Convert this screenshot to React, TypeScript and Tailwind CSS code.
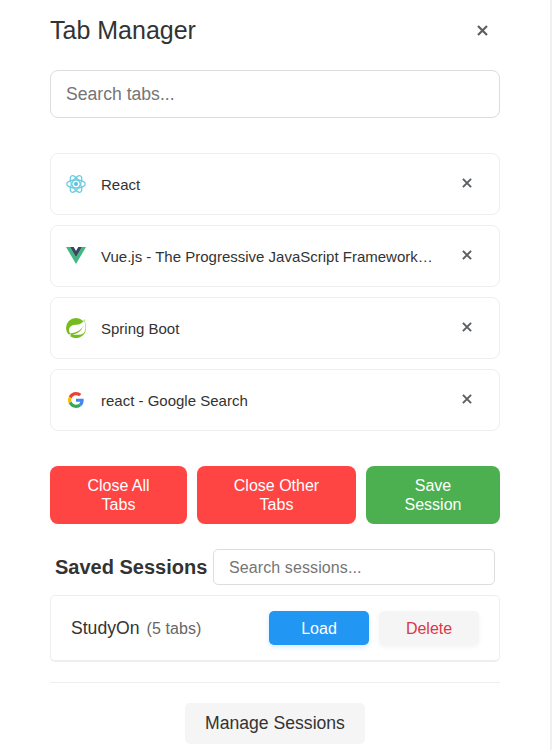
import type { ReactNode } from "react";
import { SiSpring } from "react-icons/si";

function CloseIcon({ size }: { size: number }) {
  return (
    <svg width={size} height={size} viewBox="0 0 11 11" fill="none" stroke="#5c6064" strokeWidth="2.2">
      <path d="M1 1L10 10M10 1L1 10" />
    </svg>
  );
}

function ReactIcon() {
  return (
    <svg width="20" height="20" viewBox="0 0 20 20" fill="none" stroke="#6accdf" strokeWidth="1.3">
      <ellipse cx="10" cy="10" rx="9.3" ry="4" />
      <ellipse cx="10" cy="10" rx="9.3" ry="4" transform="rotate(60 10 10)" />
      <ellipse cx="10" cy="10" rx="9.3" ry="4" transform="rotate(120 10 10)" />
      <circle cx="10" cy="10" r="2" fill="#53c1de" stroke="none" />
    </svg>
  );
}

function VueIcon() {
  return (
    <svg className="mb-px" width="20" height="17" viewBox="0 0 20 17.4" preserveAspectRatio="none">
      <path d="M0 0H4L10 10.4L16 0H20L10 17.4Z" fill="#41b883" />
      <path d="M4 0H7.7L10 4L12.3 0H16L10 10.4Z" fill="#35495e" />
    </svg>
  );
}

function GoogleIcon() {
  return (
    <svg width="16" height="16" viewBox="0 0 48 48">
      <path fill="#EA4335" d="M24 9.5c3.54 0 6.71 1.22 9.21 3.6l6.85-6.85C35.9 2.38 30.47 0 24 0 14.62 0 6.51 5.38 2.56 13.22l7.98 6.19C12.43 13.72 17.74 9.5 24 9.5z" />
      <path fill="#4285F4" d="M46.98 24.55c0-1.57-.15-3.09-.38-4.55H24v9.02h12.94c-.58 2.96-2.26 5.48-4.78 7.18l7.73 6c4.51-4.18 7.09-10.36 7.09-17.65z" />
      <path fill="#FBBC05" d="M10.53 28.59c-.48-1.45-.76-2.99-.76-4.59s.27-3.14.76-4.59l-7.98-6.19C.92 16.46 0 20.12 0 24c0 3.88.92 7.54 2.56 10.78l7.97-6.19z" />
      <path fill="#34A853" d="M24 48c6.48 0 11.93-2.13 15.89-5.81l-7.73-6c-2.15 1.45-4.92 2.3-8.16 2.3-6.26 0-11.57-4.22-13.47-9.91l-7.98 6.19C6.51 42.62 14.62 48 24 48z" />
    </svg>
  );
}

const tabs: { title: string; icon: ReactNode }[] = [
  { title: "React", icon: <ReactIcon /> },
  { title: "Vue.js - The Progressive JavaScript Framework…", icon: <VueIcon /> },
  { title: "Spring Boot", icon: <SiSpring size={20} color="#77bc1f" /> },
  { title: "react - Google Search", icon: <GoogleIcon /> },
];

export default function App() {
  return (
    <div className="flex h-[750px] w-[552px] flex-col overflow-hidden border-r-2 border-[#f0f0f0] bg-white px-[50px] font-['Liberation_Sans',Arial,sans-serif] text-[#333]">
      <header className="flex h-[61px] shrink-0 items-center justify-between pr-3">
        <h1 className="pb-[2px] text-[25px] leading-[30px]">Tab Manager</h1>
        <button aria-label="Close"><CloseIcon size={11} /></button>
      </header>
      <input
        placeholder="Search tabs..."
        className="mt-[9px] h-12 w-[450px] shrink-0 rounded-lg border border-[#ddd] px-[15px] text-[17.6px] placeholder:text-[#757575]"
      />
      <ul className="mt-[35px] flex w-[450px] flex-col gap-[10px]">
        {tabs.map((tab) => (
          <li key={tab.title} className="flex h-[62px] items-center rounded-lg border border-[#eee] pl-[15px] pr-[27px]">
            <span className="flex w-5 shrink-0 justify-center">{tab.icon}</span>
            <span className="ml-[15px] whitespace-nowrap pt-[2px] text-[15px] leading-5">{tab.title}</span>
            <button aria-label="Close tab" className="mb-[3px] ml-auto"><CloseIcon size={10} /></button>
          </li>
        ))}
      </ul>
      <div className="mt-[35px] flex w-[450px] gap-[10px] text-base leading-[19px] text-white">
        <button className="h-[58px] w-[137px] rounded-lg bg-[#ff4444] px-[30px]">Close All Tabs</button>
        <button className="h-[58px] w-[159px] rounded-lg bg-[#ff4444] px-[30px]">Close Other Tabs</button>
        <button className="h-[58px] w-[134px] rounded-lg bg-[#4caf50] px-[30px]">Save Session</button>
      </div>
      <div className="mt-[25px] flex w-[450px] items-center justify-between px-[5px]">
        <h2 className="whitespace-nowrap text-[20px] font-bold leading-6">Saved Sessions</h2>
        <input
          placeholder="Search sessions..."
          className="h-9 w-[282px] rounded-[5px] border border-[#ddd] px-[15px] pt-[2px] text-base tracking-[0.1px] placeholder:text-[#757575]"
        />
      </div>
      <div className="mt-[10px] flex h-[67px] w-[450px] shrink-0 items-center rounded-[5px] border border-b-2 border-[#eee] px-5">
        <span className="text-[17.6px]">StudyOn</span>
        <span className="ml-[7px] pt-px text-base tracking-[0.1px] text-[#666]">(5 tabs)</span>
        <div className="ml-auto flex gap-[10px] text-base">
          <button className="h-[34px] w-[100px] rounded-[5px] bg-[#2196f3] pt-px text-white shadow-[0_2px_5px_rgba(33,150,243,0.2)]">Load</button>
          <button className="h-[34px] w-[100px] rounded-[5px] bg-[#f5f5f5] pt-px text-[#dc3545] shadow-[0_2px_5px_rgba(0,0,0,0.05)]">Delete</button>
        </div>
      </div>
      <footer className="mt-5 flex w-[450px] justify-center border-t border-[#eee] pt-5">
        <button className="h-[41px] w-[180px] rounded-[5px] bg-[#f5f5f5] text-[17.6px]">Manage Sessions</button>
      </footer>
    </div>
  );
}
